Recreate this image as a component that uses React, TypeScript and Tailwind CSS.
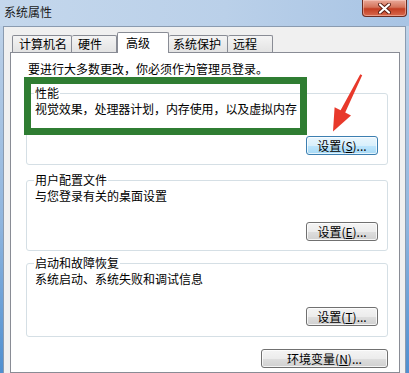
import React from "react";

function NormalBtn({ children, w }: { children: React.ReactNode; w: string }) {
  return (
    <div
      className={`${w} h-[19px] rounded-[3px] border border-[#707070] bg-[linear-gradient(#f4f4f4_0%,#ececec_50%,#dedede_51%,#d0d0d0_100%)] shadow-[inset_0_0_0_1px_rgba(255,255,255,0.75)] flex items-center justify-center text-[12px] leading-[16px] text-black`}
    >
      {children}
    </div>
  );
}

function HotBtn({ children, w }: { children: React.ReactNode; w: string }) {
  return (
    <div
      className={`${w} h-[19px] rounded-[3px] border border-[#3c7fb1] bg-[linear-gradient(#eaf6fd_0%,#d9f0fc_50%,#bee6fd_51%,#a7d9f5_100%)] shadow-[inset_0_0_0_1px_rgba(255,255,255,0.7)] flex items-center justify-center text-[12px] leading-[16px] text-black`}
    >
      {children}
    </div>
  );
}

export default function App() {
  return (
    <div className="relative w-[409px] h-[373px] overflow-hidden flex flex-col bg-[linear-gradient(180deg,#c6d8ec_0%,#b5cce6_15%,#8fb5de_60%,#4f8fd0_100%)] font-['Noto_Sans_CJK_SC',sans-serif] text-[12px] leading-[16px] text-black">
      {/* title bar */}
      <div className="h-[26px] shrink-0 flex items-start bg-[linear-gradient(90deg,#c4d7ec_0%,#bad0e9_55%,#a8c4e4_100%)]">
        <div className="pl-[4px] pt-[4px] text-[12px] leading-[16px] text-[#1a1a1a]">系统属性</div>
        <div className="ml-auto mr-[2px] w-[45px] h-[17px] rounded-b-[4px] border border-t-0 border-[#6b2c22] bg-[linear-gradient(180deg,#eaa999_0%,#d4735a_45%,#c33e22_55%,#d8694d_100%)] shadow-[inset_0_0_0_1px_rgba(255,220,210,0.45)] flex items-center justify-center">
          <svg width="13" height="11" viewBox="0 0 13 11">
            <path d="M2 1.5 L11 9.5 M11 1.5 L2 9.5" stroke="#5a1e14" strokeWidth="4" strokeLinecap="round" />
            <path d="M2 1.5 L11 9.5 M11 1.5 L2 9.5" stroke="#ffffff" strokeWidth="2.2" strokeLinecap="round" />
          </svg>
        </div>
      </div>

      {/* client area */}
      <div className="flex-1 min-h-0 ml-[3px] mr-[3px] bg-[#f0f0f0] border-l border-r border-t border-[#8a9bb0] pl-[6px] pr-[5px] pt-[5px] flex flex-col">
        {/* tabs */}
        <div className="h-[21px] shrink-0 ml-[2px] flex items-end">
          <div className="w-[60px] h-[18px] pl-[6px] border border-b-0 border-[#898c95] rounded-t-[2px] bg-[linear-gradient(#f4f4f4,#e2e2e2)] leading-[16px]">计算机名</div>
          <div className="w-[45px] h-[18px] pl-[6px] border border-b-0 border-l-0 border-[#898c95] rounded-t-[2px] bg-[linear-gradient(#f4f4f4,#e2e2e2)] leading-[16px]">硬件</div>
          <div className="relative z-10 w-[52px] h-[21px] pl-[8px] pt-[2px] border border-b-0 border-[#898c95] rounded-t-[2px] bg-white leading-[16px]">高级</div>
          <div className="w-[59px] h-[18px] pl-[4px] border border-b-0 border-l-0 border-[#898c95] rounded-t-[2px] bg-[linear-gradient(#f4f4f4,#e2e2e2)] leading-[16px]">系统保护</div>
          <div className="w-[45px] h-[18px] pl-[5px] border border-b-0 border-l-0 border-[#898c95] rounded-t-[2px] bg-[linear-gradient(#f4f4f4,#e2e2e2)] leading-[16px]">远程</div>
        </div>

        {/* panel */}
        <div className="flex-1 -mt-[1px] bg-white border border-[#898c95] pt-[8px] flex flex-col">
          <div className="pl-[17px] leading-[16px]">要进行大多数更改，你必须作为管理员登录。</div>

          <fieldset className="mt-[8px] ml-[15px] mr-[11px] h-[80px] min-w-0 border border-[#d5dfe5] rounded-[3px] pl-[7px] pr-[9px]">
            <legend className="px-[1px] leading-[16px]">性能</legend>
            <div className="pl-[1px] leading-[16px] tracking-[-0.1px]">视觉效果，处理器计划，内存使用，以及虚拟内存</div>
            <div className="mt-[19px] flex justify-end">
              <HotBtn w="w-[72px]">
                设置(<span className="underline">S</span>)...
              </HotBtn>
            </div>
          </fieldset>

          <fieldset className="mt-[7px] ml-[15px] mr-[11px] h-[79px] min-w-0 border border-[#d5dfe5] rounded-[3px] pl-[7px] pr-[9px]">
            <legend className="px-[1px] leading-[16px]">用户配置文件</legend>
            <div className="pl-[1px] leading-[16px]">与您登录有关的桌面设置</div>
            <div className="mt-[18px] flex justify-end">
              <NormalBtn w="w-[72px]">
                设置(<span className="underline">E</span>)...
              </NormalBtn>
            </div>
          </fieldset>

          <fieldset className="mt-[4px] ml-[15px] mr-[11px] h-[82px] min-w-0 border border-[#d5dfe5] rounded-[3px] pl-[7px] pr-[9px]">
            <legend className="px-[1px] leading-[16px]">启动和故障恢复</legend>
            <div className="pl-[1px] leading-[16px]">系统启动、系统失败和调试信息</div>
            <div className="mt-[20px] flex justify-end">
              <NormalBtn w="w-[72px]">
                设置(<span className="underline">T</span>)...
              </NormalBtn>
            </div>
          </fieldset>

          <div className="mt-[12px] mr-[11px] flex justify-end">
            <NormalBtn w="w-[127px]">
              环境变量(<span className="underline">N</span>)...
            </NormalBtn>
          </div>
        </div>
      </div>

      {/* annotation: green highlight box */}
      <div className="absolute left-[24px] top-[77px] w-[283px] h-[58px] border-[7px] border-[#2f7d32] pointer-events-none" />

      {/* annotation: red arrow */}
      <svg className="absolute left-0 top-0 pointer-events-none" width="409" height="373" viewBox="0 0 409 373">
        <polygon
          points="360.3,74.2 362.2,75.2 345.2,112.6 351,115.5 333,131.5 334.6,107.2 340.6,110.2"
          fill="#e8392b"
        />
      </svg>
    </div>
  );
}
